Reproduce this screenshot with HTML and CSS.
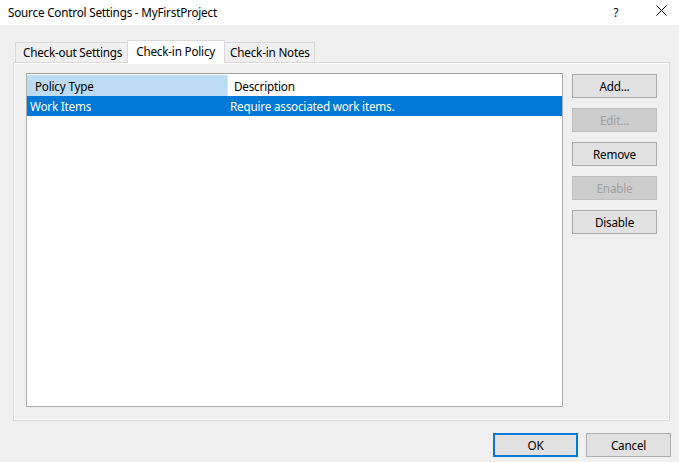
FILE: index.html
```html
<!DOCTYPE html>
<html>
<head>
<meta charset="utf-8">
<link rel="stylesheet" href="styles.css">
</head>
<body>
<div class="dialog">
  <div class="titlebar">
    <span class="title">Source Control Settings - MyFirstProject</span>
    <span class="tb-help">?</span>
    <span class="tb-close">
      <svg width="11" height="11" viewBox="0 0 11 11"><path d="M0.5 0.5 L10.5 10.5 M10.5 0.5 L0.5 10.5" stroke="#000" stroke-width="1"/></svg>
    </span>
  </div>
  <div class="body">
    <div class="tabs">
      <div class="tab tab-out">Check-out Settings</div>
      <div class="tab active">Check-in Policy</div>
      <div class="tab tab-notes">Check-in Notes</div>
    </div>
    <div class="panel">
      <div class="list">
        <div class="row header">
          <div class="col c1 sorted">Policy Type</div>
          <div class="col c2">Description</div>
        </div>
        <div class="row selected">
          <div class="col c1">Work Items</div>
          <div class="col c2">Require associated work items.</div>
        </div>
      </div>
      <div class="side">
        <button class="btn">Add...</button>
        <button class="btn" disabled>Edit...</button>
        <button class="btn">Remove</button>
        <button class="btn" disabled>Enable</button>
        <button class="btn">Disable</button>
      </div>
    </div>
    <div class="footer">
      <button class="btn default">OK</button>
      <button class="btn">Cancel</button>
    </div>
  </div>
</div>
</body>
</html>
```
FILE: styles.css
```css
html, body {
  margin: 0;
  padding: 0;
}
body {
  width: 679px;
  height: 462px;
  background: #f0f0f0;
  font-family: "Noto Sans", "Open Sans", sans-serif;
  font-size: 11.7px;
  letter-spacing: -0.2px;
  color: #000;
  overflow: hidden;
}
.dialog {
  display: flex;
  flex-direction: column;
  height: 462px;
}
.titlebar {
  height: 25px;
  background: #fff;
  display: flex;
  align-items: center;
  padding-left: 8px;
}
.title {
  flex: 1;
  margin-top: -2px;
}
.tb-help {
  width: 20px;
  text-align: center;
  margin-right: 30px;
  margin-top: -2px;
}
.tb-close {
  width: 11px;
  height: 11px;
  margin-right: 12px;
  margin-top: -4px;
  display: flex;
}
.body {
  flex: 1;
  display: flex;
  flex-direction: column;
  padding: 15px 8px 5px 13px;
}
.tabs {
  display: flex;
  align-items: flex-end;
  height: 22px;
  padding-left: 2px;
  position: relative;
  z-index: 1;
}
.tab {
  height: 20px;
  box-sizing: border-box;
  border: 1px solid #d9d9d9;
  border-bottom: none;
  background: #f0f0f0;
  padding: 0 5px;
  line-height: 19px;
  margin-right: -1px;
}
.tab.tab-out {
  padding: 0 7px;
}
.tab.tab-notes {
  padding: 0 4px 0 5px;
}
.tab.active {
  height: 23px;
  background: #fff;
  margin-left: -2px;
  margin-right: -1px;
  padding: 0 9px 0 8px;
  line-height: 20px;
  margin-bottom: -1px;
  position: relative;
  z-index: 2;
}
.panel {
  height: 359px;
  box-sizing: border-box;
  border: 1px solid #d9d9d9;
  box-shadow: inset 1px 1px 0 #fff, inset -1px -1px 0 #fff;
  margin-right: 1px;
  display: flex;
  padding: 10px 12px 13px 12px;
  gap: 9px;
}
.list {
  width: 537px;
  box-sizing: border-box;
  border: 1px solid #adadad;
  border-top-color: #a0a0a0;
  background: #fff;
  padding: 1px 0 0 0;
}
.row {
  display: flex;
  height: 21px;
  align-items: center;
}
.col {
  box-sizing: border-box;
  white-space: nowrap;
  height: 100%;
  display: flex;
  align-items: center;
}
.c1 { width: 200px; padding-left: 8px; }
.c2 { flex: 1; padding-left: 7px; }
.row.header .c1.sorted {
  background: #bcdcf4;
}
.row.header .c2 {
  border-left: 1px solid #e5e5e5;
  padding-left: 6px;
}
.row.selected {
  background: #0078d7;
  color: #fff;
  height: 20px;
}
.row.selected .c1 { padding-left: 3px; }
.row.selected .c2 { padding-left: 3px; }
.side {
  display: flex;
  flex-direction: column;
  gap: 10px;
  padding-top: 1px;
}
.btn {
  width: 85px;
  height: 24px;
  box-sizing: border-box;
  border: 1px solid #adadad;
  background: #e1e1e1;
  font-family: inherit;
  font-size: inherit;
  letter-spacing: inherit;
  color: #000;
  padding: 0;
  margin: 0;
}
.btn:disabled {
  background: #cccccc;
  border-color: #bfbfbf;
  color: #a0a0a0;
}
.btn.default {
  border: 2px solid #0078d7;
}
.footer {
  display: flex;
  justify-content: flex-end;
  gap: 8px;
  margin-top: 12px;
}
```
